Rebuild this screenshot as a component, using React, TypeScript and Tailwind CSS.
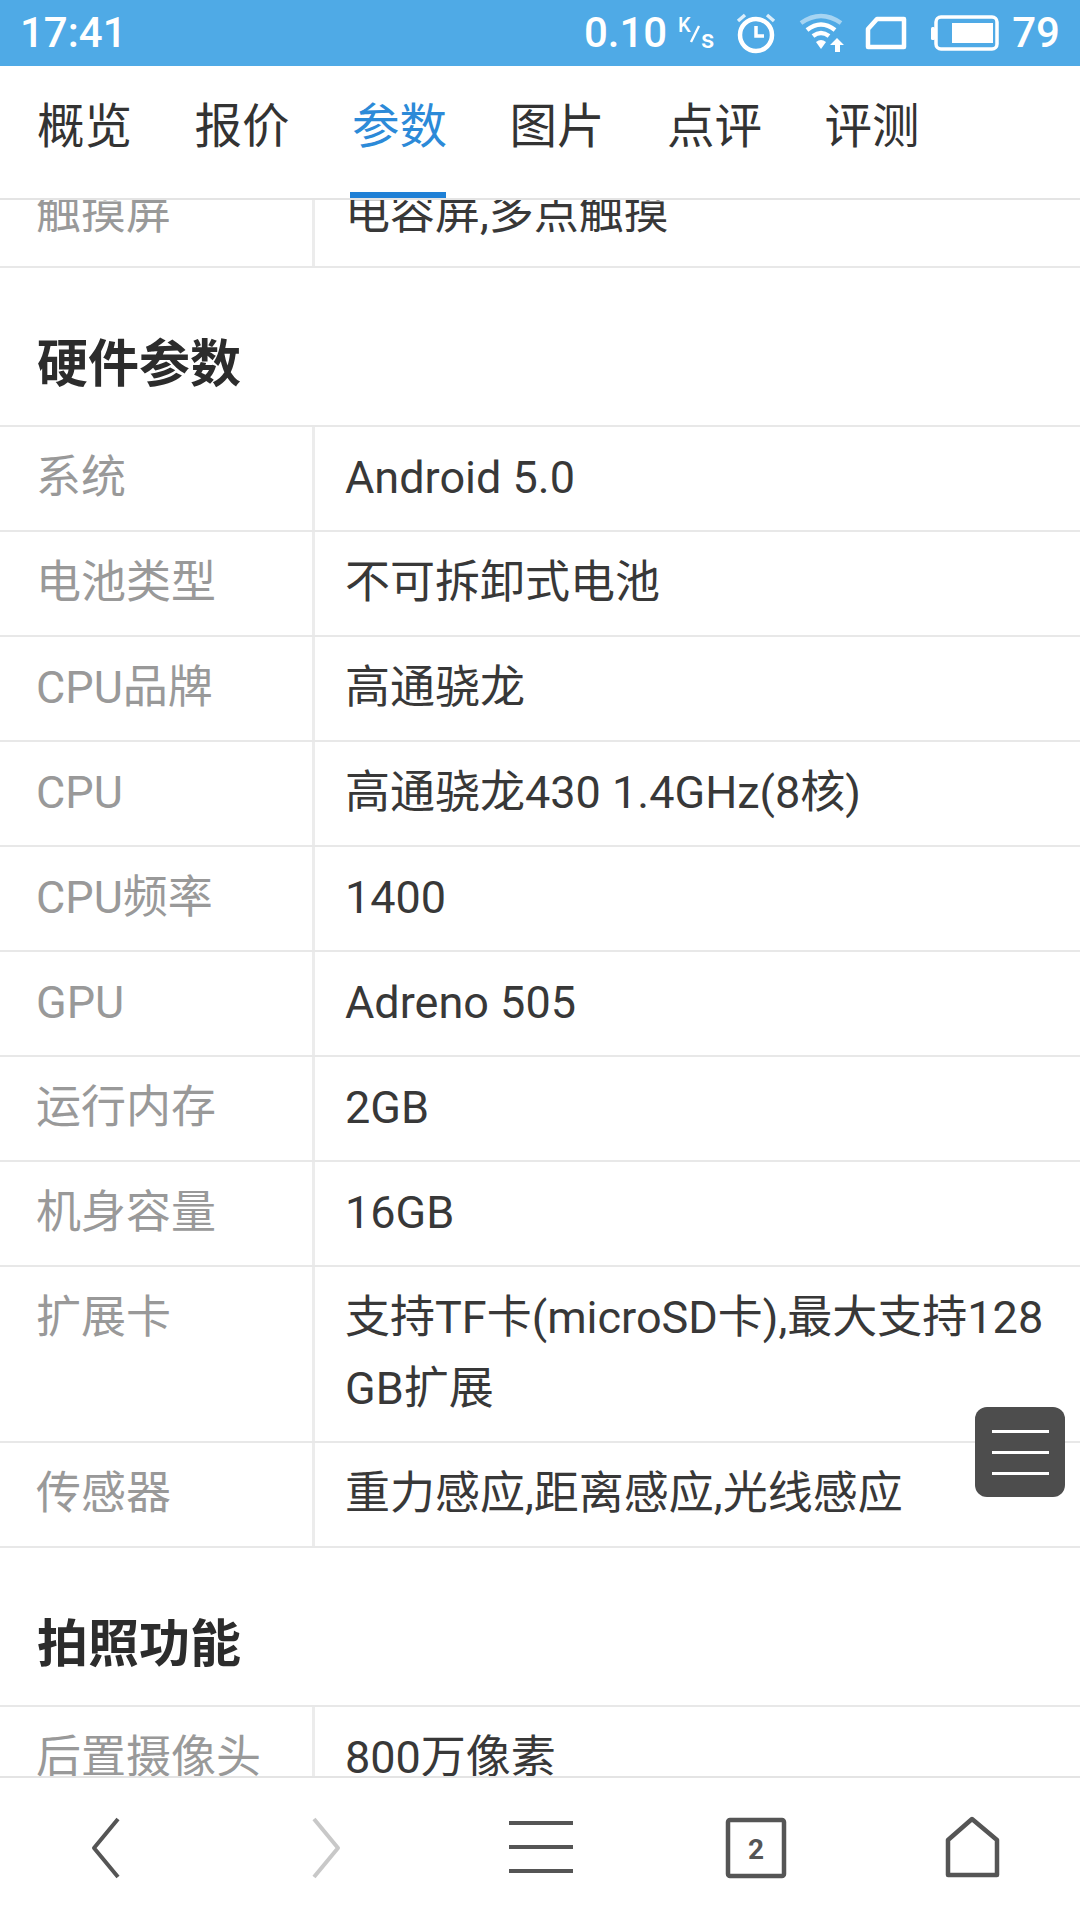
const font = { fontFamily: '"Roboto","Noto Sans CJK SC",sans-serif' };

const Row = ({ k, v, tall }: { k: string; v: string; tall?: boolean }) => (
  <div className={`flex border-b-[2px] border-[#e8e8e8] ${tall ? 'h-[176px]' : 'h-[105px]'}`}>
    <div className="w-[315px] shrink-0 border-r-[3px] border-[#ececec] pl-[36px] pt-[21px] text-[#999999] leading-[60px] whitespace-nowrap">{k}</div>
    <div className="flex-1 pl-[30px] pr-[30px] pt-[15px] text-[#383838] leading-[71px] break-all">{v}</div>
  </div>
);

const Section = ({ title }: { title: string }) => (
  <div className="h-[159px] pl-[37px] pt-[62px] border-b-[2px] border-[#e8e8e8] text-[51px] leading-[70px] font-bold text-[#2c2c2c]">{title}</div>
);

const tabs = ['概览', '报价', '参数', '图片', '点评', '评测'];

export default function App() {
  return (
    <div className="relative w-[1080px] h-[1920px] overflow-hidden bg-white flex flex-col text-[45px]" style={font}>
      <div className="h-[66px] shrink-0 bg-[#4faae6] flex items-center text-white pl-[20px] pr-[20px] font-medium text-[42px] leading-none">
        <span>17:41</span>
        <div className="ml-auto flex items-center">
          <span>0.10</span>
          <svg width="46" height="40" viewBox="0 0 46 40" className="ml-[3px]" fill="none" stroke="white">
            <text x="8" y="19" fontSize="20" fill="white" stroke="none" fontWeight="500" fontFamily="Roboto">K</text>
            <path d="M21 29 L29 13" strokeWidth="2.4" />
            <text x="31" y="35" fontSize="26" fill="white" stroke="none" fontWeight="500" fontFamily="Roboto">s</text>
          </svg>
          <svg width="42" height="42" viewBox="0 0 42 42" className="ml-[19px]" fill="none" stroke="white">
            <circle cx="21" cy="23" r="16" strokeWidth="4.5" />
            <path d="M21 14 V24 H29" strokeWidth="3.5" />
            <path d="M3 9 L10 3 M39 9 L32 3" strokeWidth="3.5" opacity="0.8" />
          </svg>
          <svg width="48" height="42" viewBox="0 0 48 42" className="ml-[22px]" fill="none">
            <path d="M2 11 Q22 -3 42 11" stroke="#a6d4f2" strokeWidth="4.5" />
            <path d="M8 18 Q22 7 36 18" stroke="white" strokeWidth="4.5" />
            <path d="M14 24 Q22 18 30 24" stroke="white" strokeWidth="4.5" />
            <path d="M17 30 Q22 26 27 30 L22 37 Z" fill="white" />
            <path d="M38 26 L45 33 H41 V40 H36 V33 H31 Z" fill="white" />
          </svg>
          <svg width="42" height="34" viewBox="0 0 42 34" className="ml-[18px]" fill="none" stroke="white">
            <path d="M12 3 H39 V31 H3 V13 Z" strokeWidth="4.5" strokeLinejoin="round" />
          </svg>
          <svg width="68" height="36" viewBox="0 0 68 36" className="ml-[24px]" fill="none">
            <rect x="5" y="2" width="61" height="32" rx="5" stroke="white" strokeWidth="3.5" />
            <rect x="0" y="12" width="4" height="13" rx="1.5" fill="white" />
            <rect x="21" y="8" width="41" height="20" fill="white" />
          </svg>
          <span className="ml-[13px]">79</span>
        </div>
      </div>

      <div className="relative z-10 h-[134px] shrink-0 bg-white border-b-[2px] border-[#e4e4e4] flex pl-[37px] gap-[69.5px] pt-[30px] text-[47.5px] leading-[62px] text-[#333333]">
        {tabs.map((t) => (
          <div key={t} className={`relative w-[88px] whitespace-nowrap ${t === '参数' ? 'text-[#2c8ad8]' : ''}`}>
            {t}
            {t === '参数' && <div className="absolute left-[-2px] w-[96px] top-[96px] h-[6px] bg-[#1f80d6]" />}
          </div>
        ))}
      </div>

      <div className="flex-1 overflow-hidden">
        <div className="mt-[-37px]">
          <Row k="触摸屏" v="电容屏,多点触摸" />
          <Section title="硬件参数" />
          <Row k="系统" v="Android 5.0" />
          <Row k="电池类型" v="不可拆卸式电池" />
          <Row k="CPU品牌" v="高通骁龙" />
          <Row k="CPU" v="高通骁龙430 1.4GHz(8核)" />
          <Row k="CPU频率" v="1400" />
          <Row k="GPU" v="Adreno 505" />
          <Row k="运行内存" v="2GB" />
          <Row k="机身容量" v="16GB" />
          <Row k="扩展卡" v="支持TF卡(microSD卡),最大支持128GB扩展" tall />
          <Row k="传感器" v="重力感应,距离感应,光线感应" />
          <Section title="拍照功能" />
          <Row k="后置摄像头" v="800万像素" />
        </div>
      </div>

      <div className="h-[144px] shrink-0 bg-white border-t-[2px] border-[#e4e4e4]">
        <svg width="1080" height="142" viewBox="0 1778 1080 142" fill="none" strokeLinejoin="round">
          <path d="M118 1819 L94 1848 L118 1877" stroke="#555555" strokeWidth="4" />
          <path d="M314 1819 L338 1848 L314 1877" stroke="#c8c8c8" strokeWidth="4" />
          <path d="M509 1823 H573 M509 1847 H573 M509 1871 H573" stroke="#555555" strokeWidth="4" />
          <rect x="728" y="1820" width="56" height="56" rx="2" stroke="#555555" strokeWidth="4.5" />
          <path d="M948 1840 L972 1819 L997 1840 V1875 H948 Z" stroke="#555555" strokeWidth="4.5" />
          <text x="756" y="1859" textAnchor="middle" fontSize="28" fontWeight="700" fill="#555555" fontFamily="Roboto">2</text>
        </svg>
      </div>

      <div className="absolute left-[975px] top-[1407px] w-[90px] h-[90px] rounded-[12px] bg-[#474747]/[0.97] flex flex-col items-center justify-center gap-[18px]">
        <div className="w-[57px] h-[3px] bg-white" />
        <div className="w-[57px] h-[3px] bg-white" />
        <div className="w-[57px] h-[3px] bg-white" />
      </div>
    </div>
  );
}
